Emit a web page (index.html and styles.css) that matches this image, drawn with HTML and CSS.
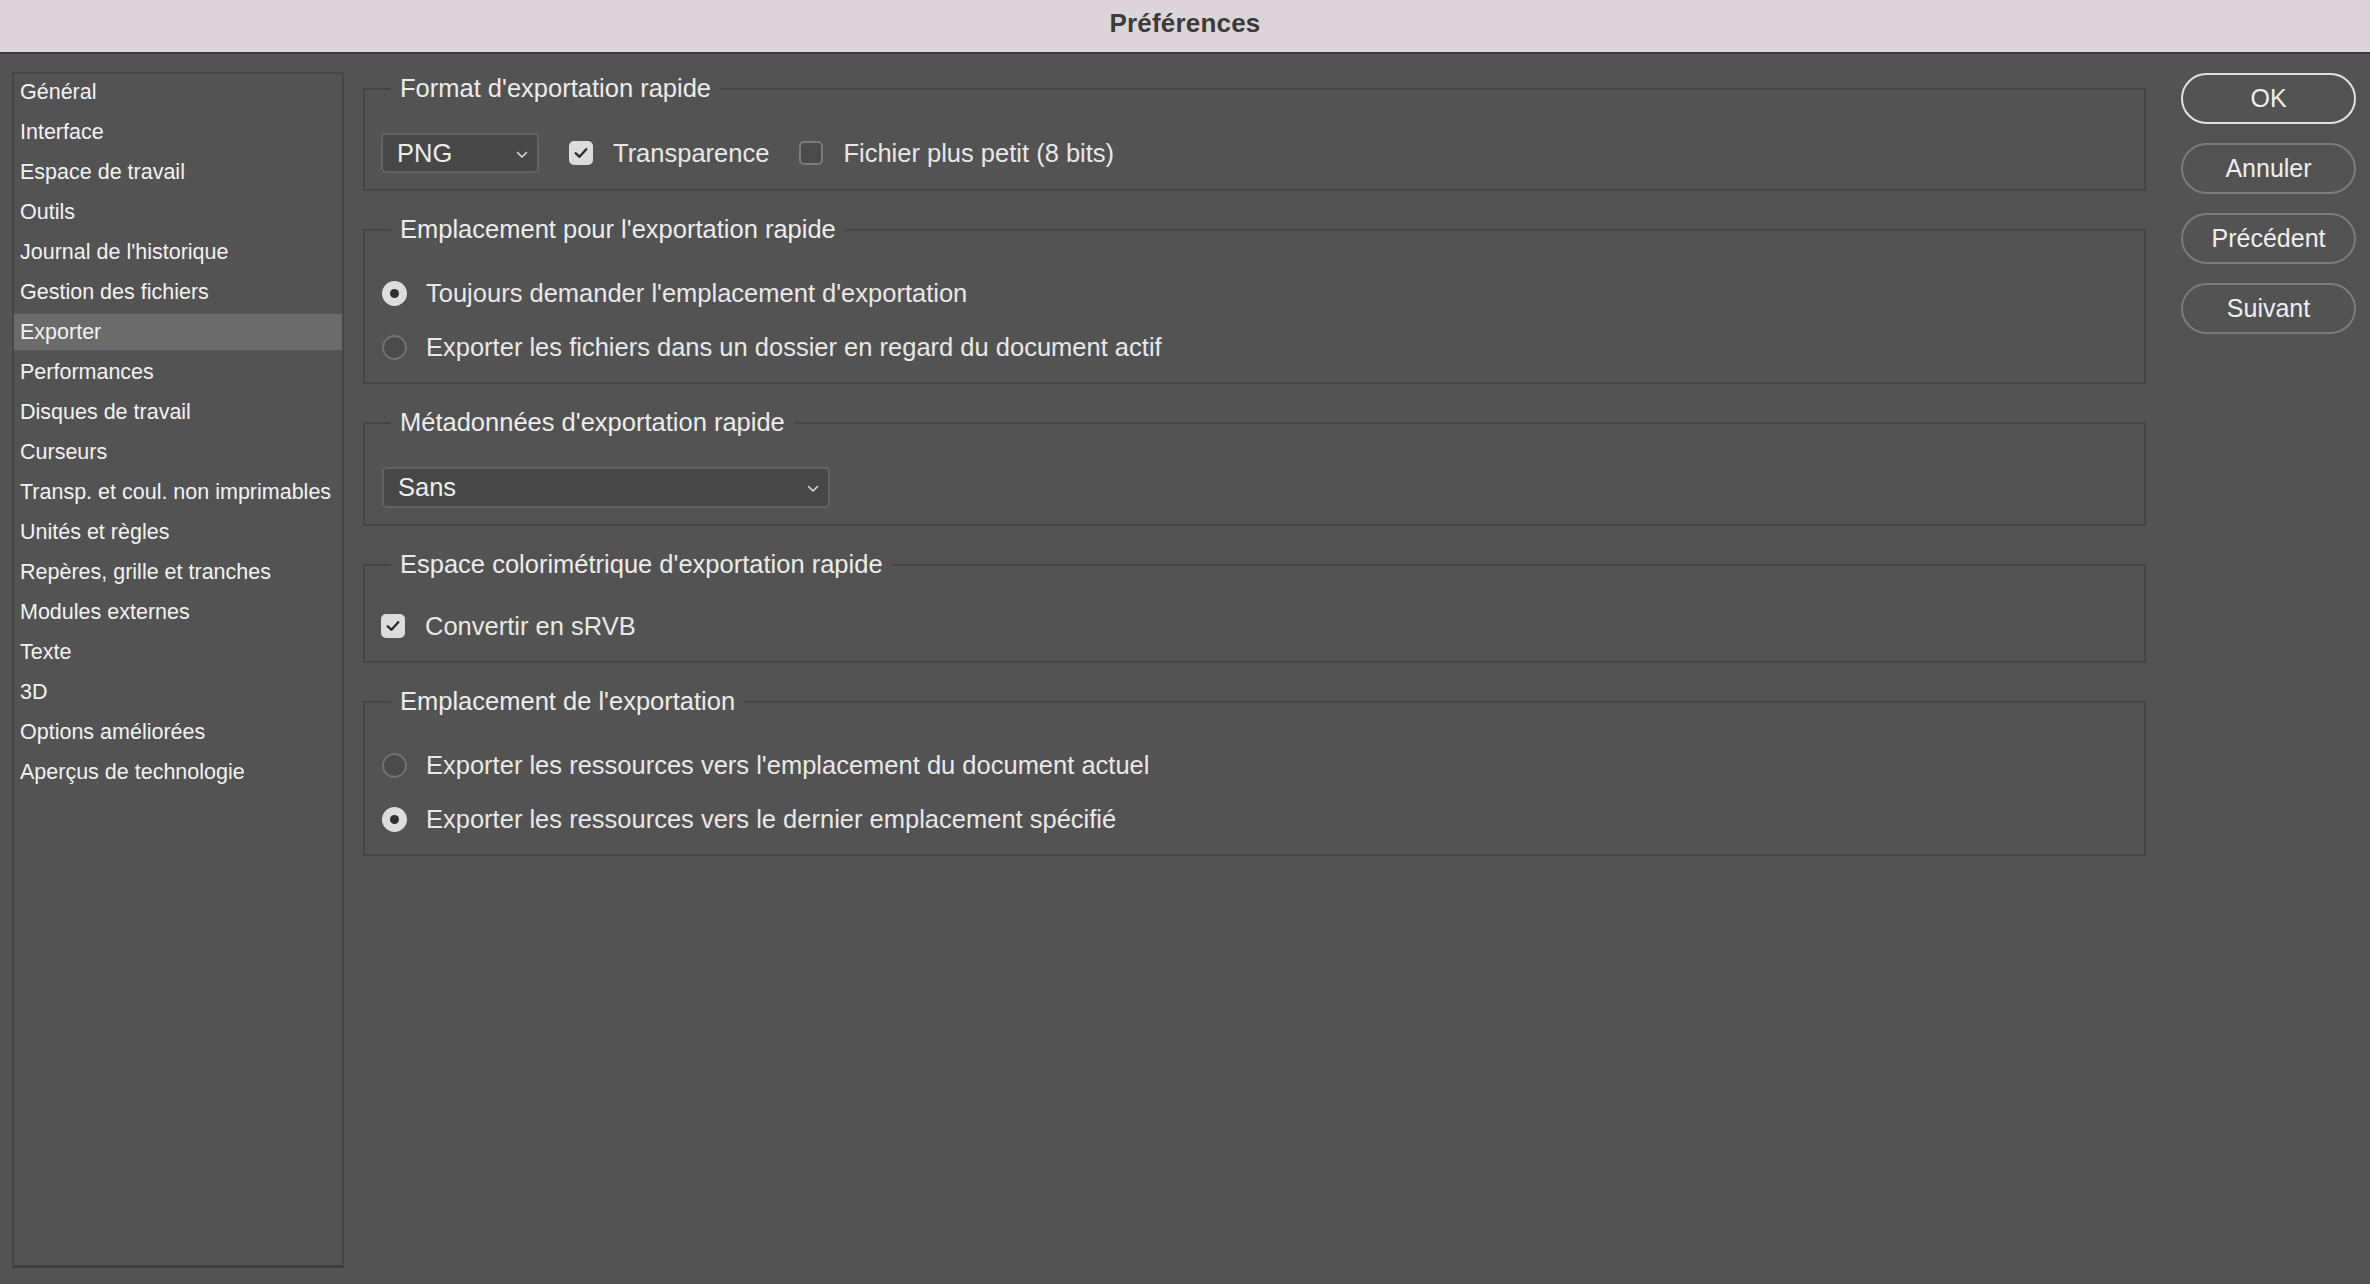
FILE: index.html
```html
<!DOCTYPE html>
<html lang="fr">
<head>
<meta charset="utf-8">
<title>Préférences</title>
<link rel="stylesheet" href="styles.css">
</head>
<body>
<header class="titlebar"><span class="titlebar-text">Préférences</span></header>
<div class="window">
  <nav class="sidebar">
    <div class="nav-item">Général</div>
    <div class="nav-item">Interface</div>
    <div class="nav-item">Espace de travail</div>
    <div class="nav-item">Outils</div>
    <div class="nav-item">Journal de l'historique</div>
    <div class="nav-item">Gestion des fichiers</div>
    <div class="nav-item is-active">Exporter</div>
    <div class="nav-item">Performances</div>
    <div class="nav-item">Disques de travail</div>
    <div class="nav-item">Curseurs</div>
    <div class="nav-item">Transp. et coul. non imprimables</div>
    <div class="nav-item">Unités et règles</div>
    <div class="nav-item">Repères, grille et tranches</div>
    <div class="nav-item">Modules externes</div>
    <div class="nav-item">Texte</div>
    <div class="nav-item">3D</div>
    <div class="nav-item">Options améliorées</div>
    <div class="nav-item">Aperçus de technologie</div>
  </nav>

  <main class="content">
    <section class="group">
      <div class="group-head"><span class="group-title">Format d'exportation rapide</span></div>
      <div class="group-body">
        <div class="row">
          <div class="select select--small"><span>PNG</span>
            <svg class="chevron" viewBox="0 0 12 8" width="12" height="8"><path d="M1.5 1.5 L6 6 L10.5 1.5" fill="none" stroke="#d8d8d8" stroke-width="1.6" stroke-linecap="round" stroke-linejoin="round"/></svg>
          </div>
          <label class="check"><span class="box is-checked"><svg viewBox="0 0 24 24" width="18" height="18"><path d="M5 12.5 L10 17 L19 7" fill="none" stroke="#2e2e2e" stroke-width="3.2" stroke-linecap="round" stroke-linejoin="round"/></svg></span><span>Transparence</span></label>
          <label class="check"><span class="box"></span><span>Fichier plus petit (8 bits)</span></label>
        </div>
      </div>
    </section>

    <section class="group group--radios">
      <div class="group-head"><span class="group-title">Emplacement pour l'exportation rapide</span></div>
      <div class="group-body group-body--list">
        <label class="radio"><span class="dot is-on"></span><span>Toujours demander l'emplacement d'exportation</span></label>
        <label class="radio"><span class="dot"></span><span>Exporter les fichiers dans un dossier en regard du document actif</span></label>
      </div>
    </section>

    <section class="group">
      <div class="group-head"><span class="group-title">Métadonnées d'exportation rapide</span></div>
      <div class="group-body">
        <div class="select select--wide"><span>Sans</span>
          <svg class="chevron" viewBox="0 0 12 8" width="12" height="8"><path d="M1.5 1.5 L6 6 L10.5 1.5" fill="none" stroke="#d8d8d8" stroke-width="1.6" stroke-linecap="round" stroke-linejoin="round"/></svg>
        </div>
      </div>
    </section>

    <section class="group group--compact">
      <div class="group-head"><span class="group-title">Espace colorimétrique d'exportation rapide</span></div>
      <div class="group-body">
        <label class="check"><span class="box is-checked"><svg viewBox="0 0 24 24" width="18" height="18"><path d="M5 12.5 L10 17 L19 7" fill="none" stroke="#2e2e2e" stroke-width="3.2" stroke-linecap="round" stroke-linejoin="round"/></svg></span><span>Convertir en sRVB</span></label>
      </div>
    </section>

    <section class="group group--radios">
      <div class="group-head"><span class="group-title">Emplacement de l'exportation</span></div>
      <div class="group-body group-body--list">
        <label class="radio"><span class="dot"></span><span>Exporter les ressources vers l'emplacement du document actuel</span></label>
        <label class="radio"><span class="dot is-on"></span><span>Exporter les ressources vers le dernier emplacement spécifié</span></label>
      </div>
    </section>
  </main>

  <aside class="actions">
    <button class="btn btn--default">OK</button>
    <button class="btn">Annuler</button>
    <button class="btn">Précédent</button>
    <button class="btn">Suivant</button>
  </aside>
</div>
</body>
</html>
```

FILE: styles.css
```css
* { box-sizing: border-box; }

html, body {
  margin: 0;
  height: 100%;
  background: #535353;
  font-family: "Liberation Sans", Arial, sans-serif;
  color: #e8e8e8;
}

body {
  display: flex;
  flex-direction: column;
  overflow: hidden;
}

.titlebar {
  height: 54px;
  flex: 0 0 54px;
  background: #dbd5d9;
  border-bottom: 2px solid #3a3a3a;
  display: flex;
  align-items: center;
  justify-content: center;
  padding-bottom: 6px;
}

.titlebar-text {
  font-weight: bold;
  font-size: 26px;
  color: #3b3b3b;
  letter-spacing: 0.2px;
}

.window {
  flex: 1;
  display: grid;
  grid-template-columns: 332px 1fr 175px;
  column-gap: 19px;
  padding: 0 14px 16px 12px;
  min-height: 0;
}

/* Sidebar */
.sidebar {
  margin-top: 18px;
  border: 2px solid #464646;
  border-bottom: 3px solid #3e3e3e;
  display: flex;
  flex-direction: column;
  gap: 4px;
}

.nav-item {
  height: 36px;
  line-height: 36px;
  padding-left: 6px;
  font-size: 21.5px;
  color: #f2f2f2;
  white-space: nowrap;
}

.nav-item.is-active {
  background: #6b6b6b;
}

/* Content groups */
.content {
  padding-top: 34px;
  display: flex;
  flex-direction: column;
  gap: 38px;
  margin-right: 16px;
}

.group {
  border: 2px solid #464646;
  padding: 0 16px 16px 16px;
}

.group--radios { padding-bottom: 15px; }
.group--compact { padding-bottom: 15px; }

.group-head {
  display: flex;
  margin-top: -17px;
  height: 30px;
}

.group-title {
  margin-left: 10px;
  padding: 0 9px;
  background: #535353;
  font-size: 25.5px;
  line-height: 30px;
  color: #ececec;
  white-space: nowrap;
}

.group-body {
  margin-top: 30px;
  display: flex;
  align-items: center;
}

.group--compact .group-body { margin-top: 27px; }

.group-body--list {
  margin-top: 29px;
  flex-direction: column;
  align-items: flex-start;
  gap: 14px;
}

.row {
  display: flex;
  align-items: center;
  height: 40px;
  gap: 30px;
}

.select {
  height: 41px;
  border: 2px solid #626262;
  border-radius: 5px;
  background: #474747;
  display: flex;
  align-items: center;
  justify-content: space-between;
  padding: 0 9px 0 14px;
  font-size: 25.5px;
  color: #ededed;
}

.select--small { width: 158px; height: 40px; }
.select--wide { width: 448px; margin-left: 1px; }

.chevron { margin-top: 3px; }

.check, .radio {
  display: flex;
  align-items: center;
  height: 40px;
  font-size: 25.5px;
  color: #e8e8e8;
  white-space: nowrap;
}

.check { gap: 20px; }
.radio { gap: 19px; }

.box {
  width: 24px;
  height: 24px;
  border-radius: 5px;
  border: 2px solid #7a7a7a;
  background: #4b4b4b;
  display: flex;
  align-items: center;
  justify-content: center;
}

.box.is-checked {
  background: #dcdcdc;
  border-color: #dcdcdc;
}

.dot {
  width: 25px;
  height: 25px;
  border-radius: 50%;
  border: 2px solid #727272;
  background: #4b4b4b;
  display: flex;
  align-items: center;
  justify-content: center;
  margin-left: 1px;
}

.dot.is-on {
  background: #dddddd;
  border-color: #dddddd;
}

.dot.is-on::after {
  content: "";
  width: 9px;
  height: 9px;
  border-radius: 50%;
  background: #303030;
}

/* Buttons */
.actions {
  padding-top: 19px;
  display: flex;
  flex-direction: column;
  gap: 19px;
}

.btn {
  width: 175px;
  height: 51px;
  border-radius: 26px;
  border: 2px solid #7b7b7b;
  background: transparent;
  font-family: "Liberation Sans", Arial, sans-serif;
  font-size: 25px;
  color: #eeeeee;
  padding: 0;
}

.btn--default {
  border-color: #e2e2e2;
}
```
